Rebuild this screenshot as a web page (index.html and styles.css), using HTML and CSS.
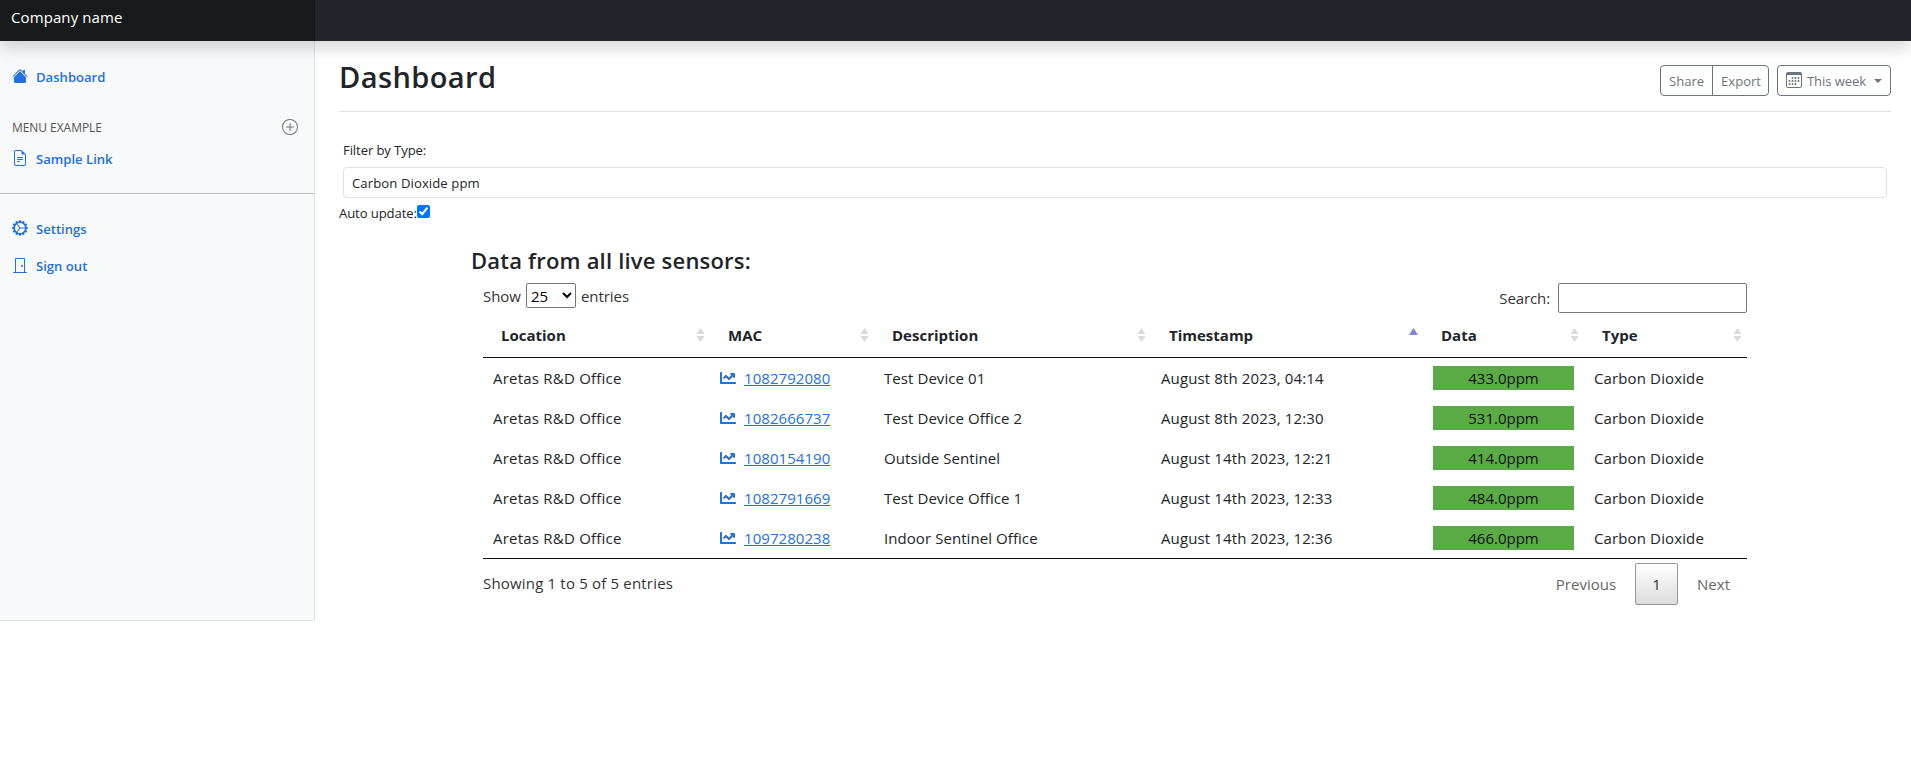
FILE: index.html
```html
<!DOCTYPE html>
<html lang="en">
<head>
<meta charset="utf-8">
<title>Dashboard</title>
<link rel="stylesheet" href="styles.css">
</head>
<body>
<svg class="defs" width="0" height="0">
  <symbol id="chart" viewBox="0 0 512 512"><path d="M496 384H64V80c0-8.84-7.16-16-16-16H16C7.16 64 0 71.16 0 80v336c0 17.67 14.33 32 32 32h464c8.84 0 16-7.16 16-16v-32c0-8.84-7.16-16-16-16zM464 96H345.94c-21.38 0-32.09 25.85-16.97 40.97l32.4 32.4L288 242.75l-73.37-73.37c-12.5-12.5-32.76-12.5-45.25 0l-68.69 68.69c-6.25 6.25-6.25 16.38 0 22.63l22.62 22.62c6.25 6.25 16.38 6.25 22.63 0L192 237.25l73.37 73.37c12.5 12.5 32.76 12.5 45.25 0l96-96 32.4 32.4c15.12 15.12 40.97 4.41 40.97-16.97V112c.01-8.84-7.15-16-15.99-16z"/></symbol>
  <symbol id="sort" viewBox="0 0 9 14"><path d="M4.5 0L8.6 6H.4zM4.5 14L.4 8h8.2z"/></symbol>
  <symbol id="asc" viewBox="0 0 9 14"><path d="M4.5 0L9 7H0z"/></symbol>
</svg>
<header class="navbar"><a class="brand">Company name</a></header>
<div class="layout">
  <nav class="sidebar">
    <a class="nav-link"><svg class="icon" viewBox="0 0 16 16"><path d="m8 3.293 6 6V13.5a1.5 1.5 0 0 1-1.5 1.5h-9A1.5 1.5 0 0 1 2 13.5V9.293l6-6zm5-.793V6l-2-2V2.500a.5.5 0 0 1 .5-.5h1a.5.5 0 0 1 .5.5z"/><path d="M7.293 1.5a1 1 0 0 1 1.414 0l6.647 6.646a.5.5 0 0 1-.708.708L8 2.207 1.354 8.854a.5.5 0 1 1-.708-.708L7.293 1.5z"/></svg><span class="nav-text">Dashboard</span></a>
    <h6 class="side-heading"><span>MENU EXAMPLE</span><svg class="icon" viewBox="0 0 16 16"><path d="M8 15A7 7 0 1 1 8 1a7 7 0 0 1 0 14zm0 1A8 8 0 1 0 8 0a8 8 0 0 0 0 16z"/><path d="M8 4a.5.5 0 0 1 .5.5v3h3a.5.5 0 0 1 0 1h-3v3a.5.5 0 0 1-1 0v-3h-3a.5.5 0 0 1 0-1h3v-3A.5.5 0 0 1 8 4z"/></svg></h6>
    <a class="nav-link"><svg class="icon" viewBox="0 0 16 16"><path d="M5.500 7a.5.5 0 0 0 0 1h5a.5.5 0 0 0 0-1h-5zM5 9.500a.5.5 0 0 1 .5-.5h5a.5.5 0 0 1 0 1h-5a.5.5 0 0 1-.5-.5zm0 2a.5.5 0 0 1 .5-.5h2a.5.5 0 0 1 0 1h-2a.5.5 0 0 1-.5-.5z"/><path d="M9.500 0H4a2 2 0 0 0-2 2v12a2 2 0 0 0 2 2h8a2 2 0 0 0 2-2V4.500L9.500 0zm0 1v2A1.500 1.500 0 0 0 11 4.500h2V14a1 1 0 0 1-1 1H4a1 1 0 0 1-1-1V2a1 1 0 0 1 1-1h5.500z"/></svg><span class="nav-text">Sample Link</span></a>
    <hr class="side-rule">
    <a class="nav-link"><svg class="icon" viewBox="0 0 16 16"><path d="M7.068.727c.243-.97 1.62-.97 1.864 0l.071.286a.96.96 0 0 0 1.622.434l.205-.211c.695-.719 1.888-.03 1.613.931l-.08.284a.96.96 0 0 0 1.187 1.187l.283-.081c.96-.275 1.65.918.931 1.613l-.211.205a.96.96 0 0 0 .434 1.622l.286.071c.97.243.97 1.62 0 1.864l-.286.071a.96.96 0 0 0-.434 1.622l.211.205c.719.695.03 1.888-.931 1.613l-.284-.08a.96.96 0 0 0-1.187 1.187l.081.283c.275.96-.918 1.65-1.613.931l-.205-.211a.96.96 0 0 0-1.622.434l-.071.286c-.243.97-1.62.97-1.864 0l-.071-.286a.96.96 0 0 0-1.622-.434l-.205.211c-.695.719-1.888.03-1.613-.931l.08-.284a.96.96 0 0 0-1.186-1.187l-.284.081c-.96.275-1.65-.918-.931-1.613l.211-.205a.96.96 0 0 0-.434-1.622l-.286-.071c-.97-.243-.97-1.62 0-1.864l.286-.071a.96.96 0 0 0 .434-1.622l-.211-.205c-.719-.695-.03-1.888.931-1.613l.284.08a.96.96 0 0 0 1.187-1.186l-.081-.284c-.275-.96.918-1.65 1.613-.931l.205.211a.96.96 0 0 0 1.622-.434l.071-.286zM12.973 8.500H8.250l-2.834 3.779A4.998 4.998 0 0 0 12.973 8.500zm0-1a4.998 4.998 0 0 0-7.557-3.779l2.834 3.780h4.723zM4.617 4.322A4.984 4.984 0 0 0 3.002 8c0 1.455.622 2.765 1.615 3.678L7.375 8 4.617 4.322z"/></svg><span class="nav-text">Settings</span></a>
    <a class="nav-link"><svg class="icon" viewBox="0 0 16 16"><path d="M3 2a1 1 0 0 1 1-1h8a1 1 0 0 1 1 1v13h1.500a.5.5 0 0 1 0 1h-13a.5.5 0 0 1 0-1H3V2zm1 13h8V2H4v13z"/><path d="M9 9a1 1 0 1 0 2 0 1 1 0 0 0-2 0z"/></svg><span class="nav-text">Sign out</span></a>
  </nav>
  <main class="main">
    <div class="title-row">
      <h1 class="title">Dashboard</h1>
      <div class="toolbar">
        <div class="btn-group"><button class="btn share">Share</button><button class="btn export">Export</button></div>
        <button class="btn week"><svg class="icon" viewBox="0 0 16 16"><path d="M14 0H2a2 2 0 0 0-2 2v12a2 2 0 0 0 2 2h12a2 2 0 0 0 2-2V2a2 2 0 0 0-2-2zM1 3.857C1 3.384 1.448 3 2 3h12c.552 0 1 .384 1 .857v10.286c0 .473-.448.857-1 .857H2c-.552 0-1-.384-1-.857V3.857z"/><path d="M6.500 7a1 1 0 1 0 0-2 1 1 0 0 0 0 2zm3 0a1 1 0 1 0 0-2 1 1 0 0 0 0 2zm3 0a1 1 0 1 0 0-2 1 1 0 0 0 0 2zm-9 3a1 1 0 1 0 0-2 1 1 0 0 0 0 2zm3 0a1 1 0 1 0 0-2 1 1 0 0 0 0 2zm3 0a1 1 0 1 0 0-2 1 1 0 0 0 0 2zm3 0a1 1 0 1 0 0-2 1 1 0 0 0 0 2zm-9 3a1 1 0 1 0 0-2 1 1 0 0 0 0 2zm3 0a1 1 0 1 0 0-2 1 1 0 0 0 0 2zm3 0a1 1 0 1 0 0-2 1 1 0 0 0 0 2z"/></svg><span class="week-text">This week</span><span class="caret"></span></button>
      </div>
    </div>
    <div class="filter">
      <label class="filter-label">Filter by Type:</label>
      <div class="filter-select">Carbon Dioxide ppm</div>
    </div>
    <label class="auto"><span>Auto update:</span><input type="checkbox" class="check" checked></label>
    <section class="sensors">
      <h4 class="sensors-title">Data from all live sensors:</h4>
      <div class="table-wrap">
        <div class="controls">
          <label class="length"><span>Show</span><select class="length-select"><option>25</option></select><span>entries</span></label>
          <label class="search"><span>Search:</span><input type="search" class="search-input"></label>
        </div>
        <table class="grid">
          <colgroup><col class="c1"><col class="c2"><col class="c3"><col class="c4"><col class="c5"><col class="c6"></colgroup>
          <thead><tr>
            <th><div class="th"><span>Location</span><svg class="sort"><use href="#sort"/></svg></div></th>
            <th><div class="th"><span>MAC</span><svg class="sort"><use href="#sort"/></svg></div></th>
            <th><div class="th"><span>Description</span><svg class="sort"><use href="#sort"/></svg></div></th>
            <th><div class="th"><span>Timestamp</span><svg class="sort asc"><use href="#asc"/></svg></div></th>
            <th><div class="th"><span>Data</span><svg class="sort"><use href="#sort"/></svg></div></th>
            <th><div class="th"><span>Type</span><svg class="sort"><use href="#sort"/></svg></div></th>
          </tr></thead>
          <tbody>
            <tr><td class="location">Aretas R&amp;D Office</td><td><svg class="chart"><use href="#chart"/></svg><a class="mac">1082792080</a></td><td class="desc">Test Device 01</td><td class="time">August 8th 2023, 04:14</td><td><div class="reading">433.0ppm</div></td><td class="type">Carbon Dioxide</td></tr>
            <tr><td class="location">Aretas R&amp;D Office</td><td><svg class="chart"><use href="#chart"/></svg><a class="mac">1082666737</a></td><td class="desc">Test Device Office 2</td><td class="time">August 8th 2023, 12:30</td><td><div class="reading">531.0ppm</div></td><td class="type">Carbon Dioxide</td></tr>
            <tr><td class="location">Aretas R&amp;D Office</td><td><svg class="chart"><use href="#chart"/></svg><a class="mac">1080154190</a></td><td class="desc">Outside Sentinel</td><td class="time">August 14th 2023, 12:21</td><td><div class="reading">414.0ppm</div></td><td class="type">Carbon Dioxide</td></tr>
            <tr><td class="location">Aretas R&amp;D Office</td><td><svg class="chart"><use href="#chart"/></svg><a class="mac">1082791669</a></td><td class="desc">Test Device Office 1</td><td class="time">August 14th 2023, 12:33</td><td><div class="reading">484.0ppm</div></td><td class="type">Carbon Dioxide</td></tr>
            <tr><td class="location">Aretas R&amp;D Office</td><td><svg class="chart"><use href="#chart"/></svg><a class="mac">1097280238</a></td><td class="desc">Indoor Sentinel Office</td><td class="time">August 14th 2023, 12:36</td><td><div class="reading">466.0ppm</div></td><td class="type">Carbon Dioxide</td></tr>
          </tbody>
        </table>
        <div class="table-foot">
          <div class="info">Showing 1 to 5 of 5 entries</div>
          <div class="pages"><a class="page prev">Previous</a><a class="page current">1</a><a class="page next">Next</a></div>
        </div>
      </div>
    </section>
  </main>
</div>
</body>
</html>
```
FILE: styles.css
```css
* { box-sizing: border-box; }
body {
  margin: 0;
  background: #fff;
  color: #212529;
  font-family: "Open Sans", "Noto Sans", sans-serif;
  font-size: 15px;
  line-height: 24px;
}
h1, h4, h6 { margin: 0; }
.defs { position: absolute; }
.icon { width: 16px; height: 16px; fill: currentColor; flex: none; }

.navbar {
  height: 41px;
  background: #212529;
  position: relative;
  z-index: 1;
  box-shadow: 0 8px 16px rgba(0, 0, 0, .15);
}
.brand {
  display: block;
  width: 315px;
  height: 41px;
  padding: 5px 11px;
  color: #fff;
  letter-spacing: .1px;
  background: rgba(0, 0, 0, .25);
  box-shadow: inset -1px 0 0 rgba(0, 0, 0, .25);
}

.layout { display: flex; align-items: flex-start; }
.sidebar {
  width: 315px;
  height: 580px;
  padding-top: 17px;
  background: #f8f9fa;
  border-right: 1px solid #dee2e6;
  border-bottom: 1px solid #dee2e6;
  font-size: 13.1px;
}
.nav-link {
  display: flex;
  align-items: center;
  gap: 8px;
  height: 37px;
  padding: 0 12px;
  color: #2470dc;
  font-weight: 600;
}
.nav-link .icon { margin-top: -1px; }
.side-heading {
  display: flex;
  align-items: center;
  justify-content: space-between;
  height: 16px;
  margin: 24px 16px 5px 12px;
  color: #6c757d;
  font-size: 12px;
  font-weight: 400;
}
.side-heading span { padding-top: 1px; color: #555; letter-spacing: -.05px; }
.side-rule {
  height: 1px;
  margin: 16px 0;
  border: 0;
  background: #bfc1c4;
}

.main { flex: 1; padding: 16px 20px 0 24px; }
.title-row {
  display: flex;
  justify-content: space-between;
  height: 55px;
  margin-bottom: 16px;
  border-bottom: 1px solid #dee2e6;
}
.title { font-size: 29px; font-weight: 600; line-height: 40px; letter-spacing: .4px; }
.toolbar { display: flex; gap: 8px; padding-top: 8px; }
.btn-group { display: flex; }
.btn {
  display: flex;
  align-items: center;
  height: 31px;
  padding: 0 8px;
  border: 1px solid #6c757d;
  border-radius: 4px;
  background: transparent;
  color: #6c757d;
  font: 13.1px "Open Sans", sans-serif;
  white-space: nowrap;
}
.share { width: 53px; border-radius: 4px 0 0 4px; }
.export { width: 57px; margin-left: -1px; border-radius: 0 4px 4px 0; }
.week { width: 114px; }
.week .icon { margin-top: -2px; }
.week-text { width: 60px; margin-left: 5px; letter-spacing: -.1px; }
.caret {
  margin-left: 8px;
  border: 4px solid transparent;
  border-top-color: #6c757d;
  border-bottom: 0;
}

.filter { padding: 12px 4px 0; font-size: 13.1px; }
.filter-label { display: block; height: 27px; line-height: 21px; letter-spacing: -.1px; }
.filter-select {
  height: 31px;
  padding: 0 8px;
  border: 1px solid #dee2e6;
  border-radius: 4px;
  line-height: 30px;
  letter-spacing: .1px;
}
.auto { display: flex; height: 31px; line-height: 31px; font-size: 13.1px; letter-spacing: -.1px; }
.check { width: 13px; height: 13px; margin: 7px 0 0; }

.sensors { width: 1288px; margin: 17px 0 0 132px; }
.sensors-title { font-size: 22px; font-weight: 600; line-height: 29px; letter-spacing: .2px; }
.table-wrap { padding: 0 12px; }
.controls { display: flex; justify-content: space-between; height: 30px; margin-top: 8px; color: #333; }
.length { display: flex; gap: 5px; line-height: 26px; letter-spacing: -.05px; }
.length-select {
  width: 50px;
  height: 25px;
  padding: 0;
  border: 1px solid #767676;
  border-radius: 2px;
  background: #fff;
  font: 15px "Open Sans", sans-serif;
}
.search { display: flex; gap: 8px; line-height: 30px; letter-spacing: -.1px; }
.search-input { width: 189px; height: 30px; border: 1px solid #767676; border-radius: 2px; }

.grid { width: 1264px; border-collapse: separate; border-spacing: 0; table-layout: fixed; border-bottom: 1px solid #111; }
.c1 { width: 227px; }
.c2 { width: 164px; }
.c3 { width: 277px; }
.c4 { width: 272px; }
.c5 { width: 161px; }
.c6 { width: 163px; }
.grid th { height: 45px; padding: 0 5px 0 18px; border-bottom: 1px solid #111; font-weight: 700; text-align: left; }
.th { display: flex; align-items: center; justify-content: space-between; }
.sort { width: 9px; height: 14px; margin-top: -1px; fill: #d9d9d9; }
.asc { fill: #8484d6; }
.grid td { height: 40px; padding: 8px 10px; white-space: nowrap; }
.location { letter-spacing: .22px; }
.desc { letter-spacing: .07px; }
.type { letter-spacing: .13px; }
.time { letter-spacing: .13px; }
.chart { width: 16px; height: 16px; margin-right: 8px; fill: #2470dc; vertical-align: -2px; }
.mac { color: #2470dc; letter-spacing: .06px; text-decoration: underline; }
.reading { height: 24px; background: #5aaa46; color: #111; text-align: center; }

.table-foot { display: flex; justify-content: space-between; padding-top: 4px; color: #333; }
.info { padding-top: 8px; letter-spacing: .18px; }
.pages { display: flex; }
.page { height: 42px; line-height: 42px; color: #666; }
.current {
  width: 43px;
  margin: 0 19px;
  border: 1px solid #979797;
  border-radius: 2px;
  background: linear-gradient(#fff, #dcdcdc);
  color: #333;
  line-height: 40px;
  text-align: center;
}
.next { padding-right: 17px; }
```
